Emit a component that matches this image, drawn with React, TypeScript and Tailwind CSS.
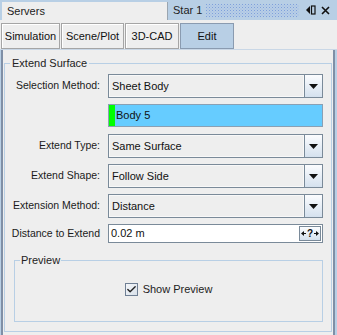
import { Check } from "lucide-react";

const FONT = { fontFamily: '"Liberation Sans", Arial, sans-serif' };

const tabs = [
  { name: "Simulation", w: "w-[59px]" },
  { name: "Scene/Plot", w: "w-[63px]" },
  { name: "3D-CAD", w: "w-[54px]" },
  { name: "Edit", w: "w-[54px]" },
];

function Combo({ label, value }: { label: string; value: string }) {
  return (
    <div className="flex h-[24px] items-center">
      <div className="w-[96px] shrink-0 pr-[1px] text-right text-[#1a1a1a]">{label}</div>
      <div className="ml-[7px] flex h-[24px] w-[215px] border border-[#7a8a99] bg-[#eeeeee]">
        <div className="flex flex-1 items-center border border-[#f8f8f8] pl-[2px] text-[11px] text-[#111]">{value}</div>
        <div className="flex w-[18px] items-center justify-center border-l border-[#7a8a99] bg-gradient-to-b from-[#fbfcfe] to-[#d5e1ee]">
          <svg width="9" height="5" viewBox="0 0 9 5">
            <polygon points="0,0 9,0 4.5,5" fill="#111" />
          </svg>
        </div>
      </div>
    </div>
  );
}

export default function App() {
  return (
    <div className="flex h-[335px] w-[337px] flex-col bg-[#eeeeee] text-[10.5px]" style={FONT}>
      {/* title strip */}
      <div className="flex h-[20px] shrink-0 bg-[#b8cfe5]">
        <div className="ml-[2px] mt-[2px] flex h-[18px] w-[166px] items-center border-r border-[#9aa5b0] bg-[#eeeeee] pl-[5px] text-[11px] text-[#222]">
          Servers
        </div>
        <div className="flex flex-1 items-center">
          <span className="ml-[5px] text-[11px] text-[#222]">Star 1</span>
          <svg className="ml-[4px]" width="93" height="13">
            <defs>
              <pattern id="dots" width="3" height="3" patternUnits="userSpaceOnUse">
                <rect x="0" y="0" width="1" height="1" fill="#7f9fdc" />
                <rect x="1.5" y="1.5" width="1" height="1" fill="#9ab3e4" />
              </pattern>
            </defs>
            <rect width="93" height="13" fill="url(#dots)" />
          </svg>
          <svg className="ml-[7px]" width="10" height="10" viewBox="0 0 10 10">
            <polygon points="0,5 4,1 4,9" fill="#111" />
            <rect x="5.5" y="1" width="3.5" height="8" fill="none" stroke="#111" strokeWidth="1.2" />
          </svg>
          <svg className="ml-[5px]" width="9" height="9" viewBox="0 0 9 9">
            <path d="M1 1 L8 8 M8 1 L1 8" stroke="#111" strokeWidth="1.6" />
          </svg>
        </div>
      </div>

      {/* tabs */}
      <div className="flex h-[29px] shrink-0 items-end gap-[1px] pl-[1px] pt-[3px]">
        {tabs.map((t) => {
          const active = t.name === "Edit";
          return (
            <div
              key={t.name}
              className={
                active
                  ? `flex h-[26px] ${t.w} items-center justify-center border border-[#8a9bb0] bg-[#b8cfe5] text-[11px] text-[#111]`
                  : `flex h-[26px] ${t.w} items-center justify-center border border-[#a5a5a5] bg-[#eeeeee] text-[11px] text-[#111] shadow-[inset_1px_1px_0_#ffffff]`
              }
            >
              {t.name}
            </div>
          );
        })}
      </div>

      {/* panel */}
      <div className="flex min-h-0 flex-1 border-t border-[#c9d7e6]">
        <div className="w-[1px] bg-[#b8cfe5]" />
        <div className="w-[2px] bg-[#7f8fa6]" />
        <div className="flex flex-1 flex-col pl-[1px] pr-[1px]">
          <fieldset className="mt-[6px] flex-1 border border-[#b8cfe5] pb-[9px]">
            <legend className="ml-[5px] px-[2px] text-[11px] leading-[14px] text-[#222]">Extend Surface</legend>
            <div className="flex flex-col gap-[6px] pt-[4px]">
              <Combo label="Selection Method:" value="Sheet Body" />
              <div className="flex h-[24px] items-start">
                <div className="w-[96px] shrink-0" />
                <div className="ml-[7px] flex h-[23px] w-[215px] border border-[#8aa0b4] bg-[#66ccff]">
                  <div className="w-[6px] bg-[#00ff00]" />
                  <div className="flex items-center pl-[1px] text-[11px] text-[#111]">Body 5</div>
                </div>
              </div>
              <Combo label="Extend Type:" value="Same Surface" />
              <Combo label="Extend Shape:" value="Follow Side" />
              <Combo label="Extension Method:" value="Distance" />
              <div className="flex h-[24px] items-start">
                <div className="flex h-[19px] w-[96px] shrink-0 items-center justify-end pr-[1px] text-[#1a1a1a]">
                  Distance to Extend
                </div>
                <div className="ml-[7px] flex h-[19px] w-[215px] border border-[#7a8a99] bg-white">
                  <div className="flex flex-1 items-center pl-[2px] text-[11px] text-[#111]">0.02 m</div>
                  <div className="my-[1px] mr-[1px] flex w-[22px] items-center justify-center gap-[1px] border border-[#7a8a99] bg-gradient-to-b from-[#fbfcfe] to-[#d5e1ee] text-[10px] font-bold text-[#111]">
                    <svg width="5" height="5" viewBox="0 0 5 5">
                      <polygon points="0,2.5 3,0 3,5" fill="#111" />
                      <rect x="3" y="2" width="2" height="1" fill="#111" />
                    </svg>
                    <span className="leading-none">?</span>
                    <svg width="5" height="5" viewBox="0 0 5 5">
                      <polygon points="5,2.5 2,0 2,5" fill="#111" />
                      <rect x="0" y="2" width="2" height="1" fill="#111" />
                    </svg>
                  </div>
                </div>
              </div>
            </div>
            <fieldset className="ml-[9px] mr-[8px] mt-[5px] h-[69px] border border-[#b8cfe5]">
              <legend className="ml-[5px] px-[1px] text-[11px] leading-[14px] text-[#222]">Preview</legend>
              <div className="flex items-center justify-center pt-[14px]">
                <div className="flex h-[13px] w-[13px] items-center justify-center border border-[#6f7f94] bg-gradient-to-br from-[#f4f6f9] to-[#d9e1ea]">
                  <Check size={11} strokeWidth={3} color="#222" />
                </div>
                <span className="ml-[5px] text-[11px] text-[#222]">Show Preview</span>
              </div>
            </fieldset>
          </fieldset>
          <div className="h-[3px]" />
        </div>
        <div className="w-[2px] bg-[#7f8fa6]" />
        <div className="w-[2px] bg-[#b8cfe5]" />
      </div>
    </div>
  );
}
